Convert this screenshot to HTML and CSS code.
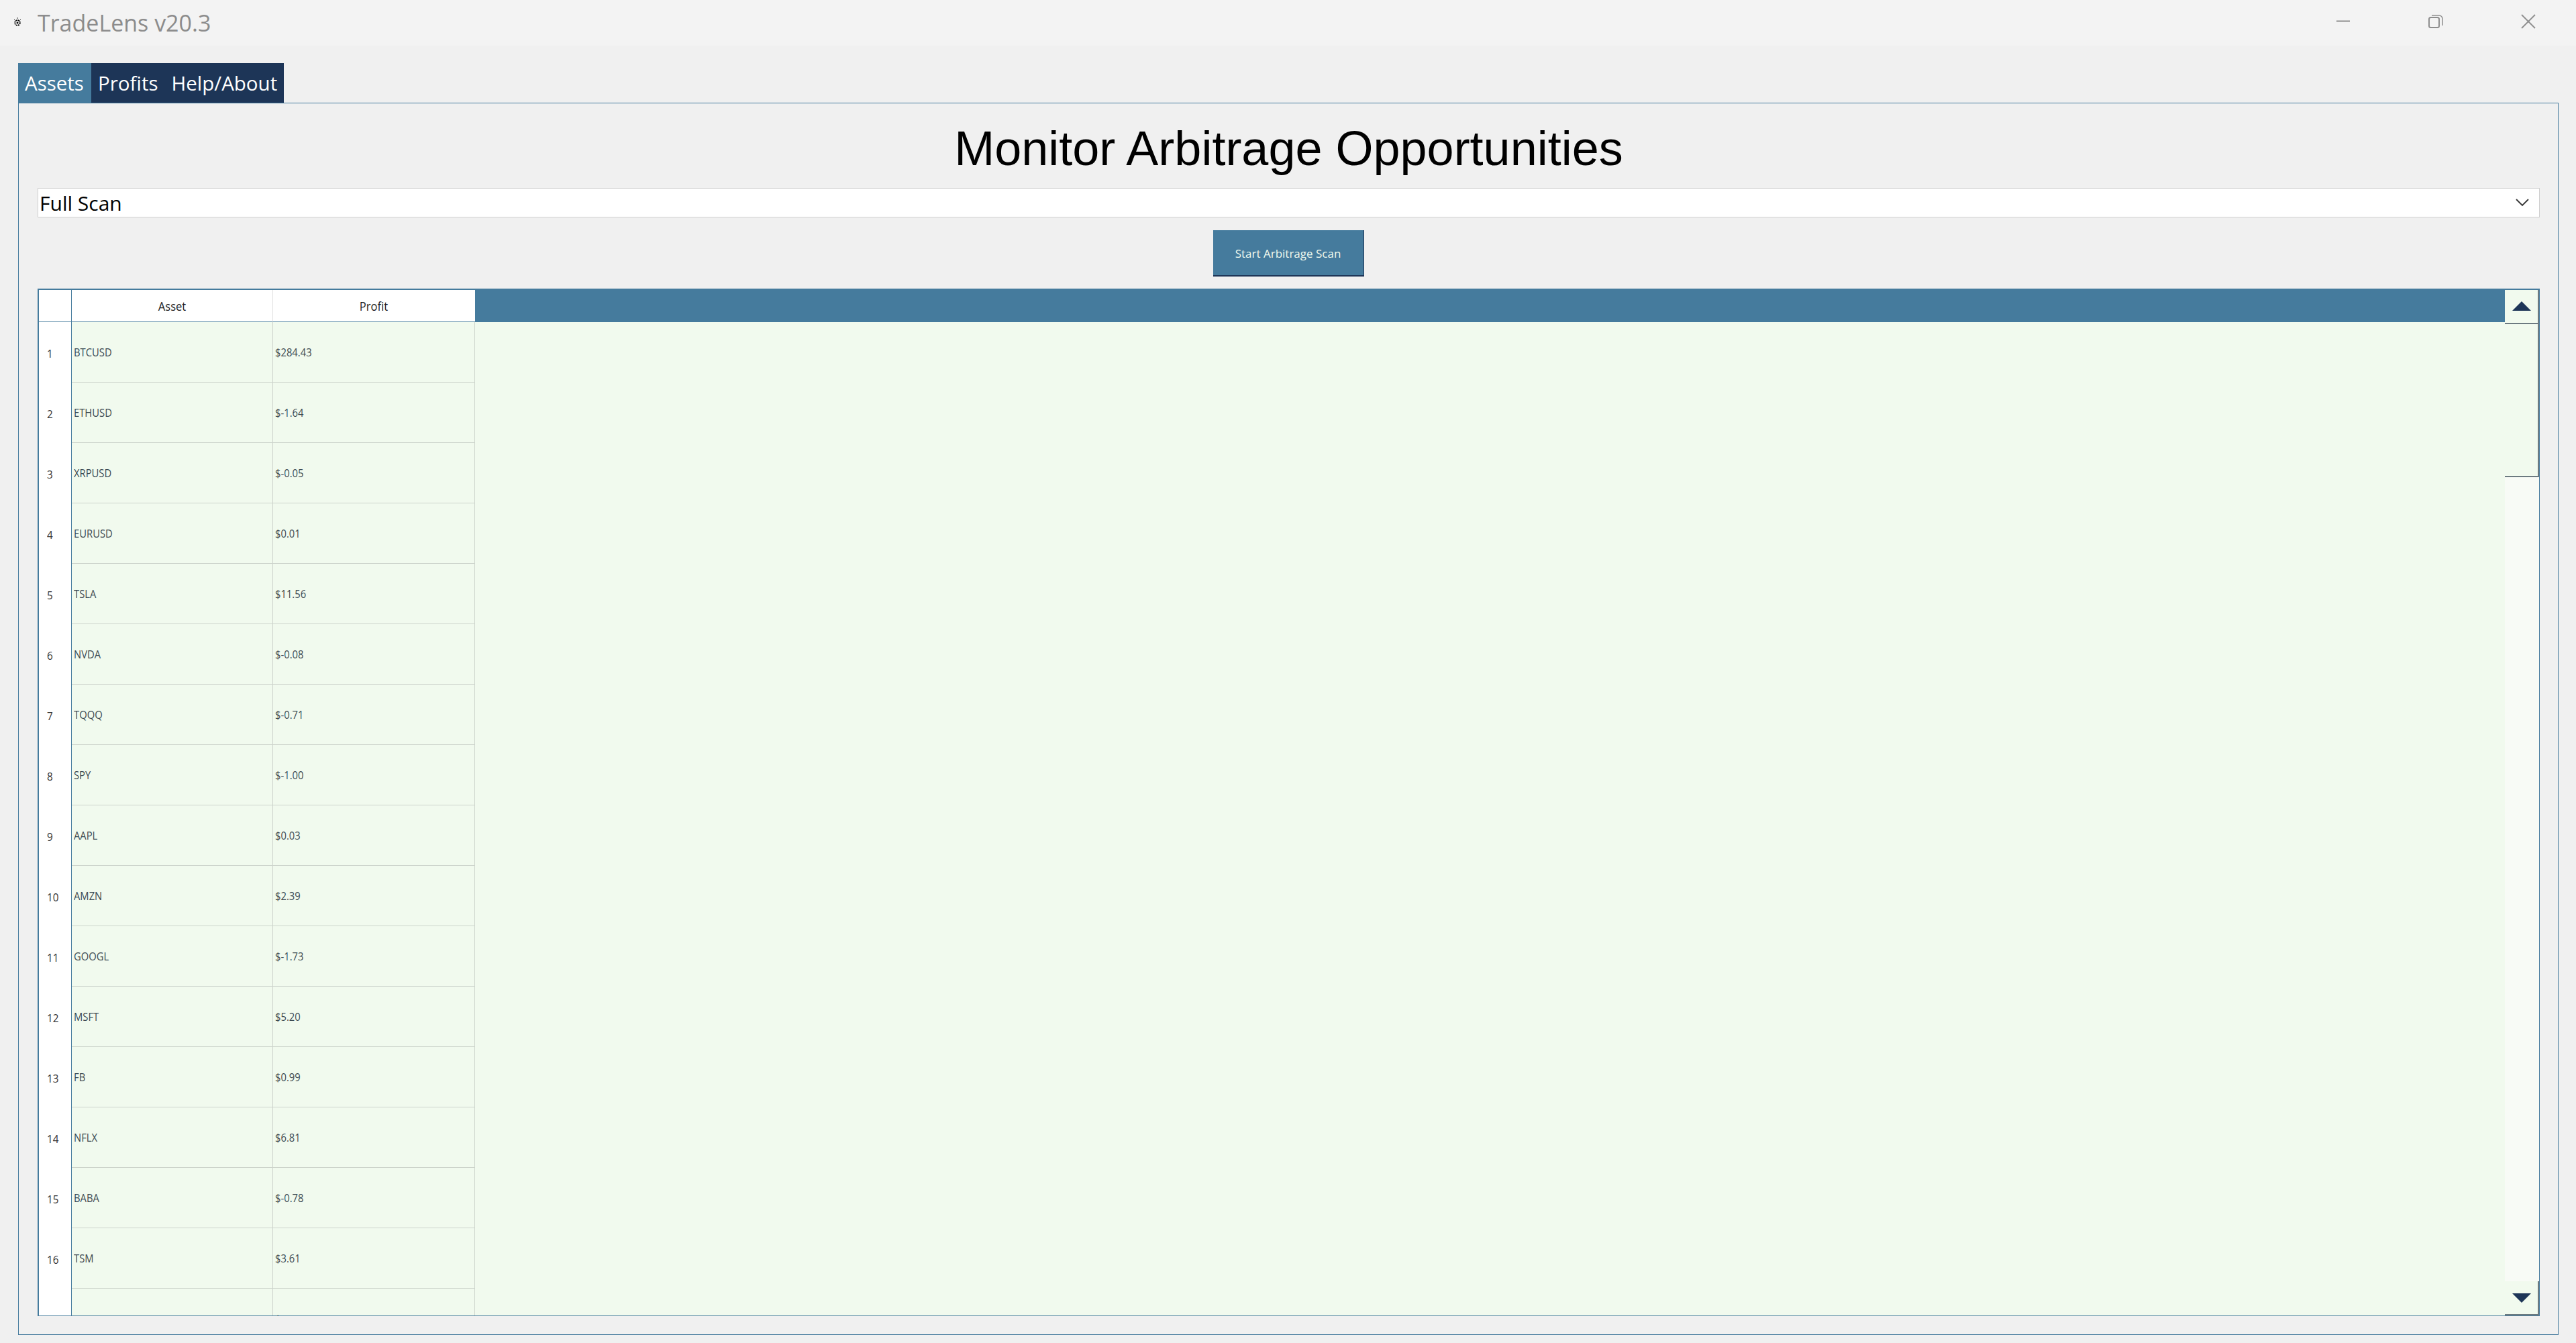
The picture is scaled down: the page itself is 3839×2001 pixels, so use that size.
FILE: index.html
```html
<!DOCTYPE html>
<html lang="en">
<head>
<meta charset="utf-8">
<title>TradeLens v20.3</title>
<link rel="stylesheet" href="styles.css">
</head>
<body>
<header class="titlebar">
  <div class="app-id">
    <svg class="feather" width="12" height="14" viewBox="0 0 12 14"><circle cx="6" cy="8" r="3.800" fill="none" stroke="#000" stroke-width="1.800" stroke-dasharray="2 1"/><circle cx="6" cy="8" r="1.500" fill="#111"/><path d="M6 0v2M1 3l1.500 1.500M11 3L9.500 4.500" stroke="#333" stroke-width="1"/></svg>
    <span class="app-title">TradeLens v20.3</span>
  </div>
  <div class="win-controls">
    <svg class="win-btn" width="22" height="22" viewBox="0 0 22 22"><path d="M1 10.500h20" stroke="#8e8e8e" stroke-width="2"/></svg>
    <svg class="win-btn" width="22" height="22" viewBox="0 0 22 22"><rect x="1" y="5" width="15" height="15" rx="2.500" fill="none" stroke="#8e8e8e" stroke-width="2"/><path d="M5 2h11a5 5 0 0 1 5 5v10" fill="none" stroke="#8e8e8e" stroke-width="1.500"/></svg>
    <svg class="win-btn" width="22" height="22" viewBox="0 0 22 22"><path d="M1 1l20 20M21 1L1 21" stroke="#8e8e8e" stroke-width="1.800"/></svg>
  </div>
</header>
<main class="main">
  <nav class="tabs">
    <div class="tab tab-active">Assets</div>
    <div class="tab">Profits</div>
    <div class="tab">Help/About</div>
  </nav>
  <section class="pane">
    <h1 class="heading">Monitor Arbitrage Opportunities</h1>
    <div class="combo">
      <span>Full Scan</span>
      <svg width="20" height="12" viewBox="0 0 20 12"><path d="M1 1l9 9 9-9" fill="none" stroke="#333" stroke-width="1.800"/></svg>
    </div>
    <div class="btn-row"><button class="scan-btn">Start Arbitrage Scan</button></div>
    <div class="table">
      <div class="table-left">
        <div class="thead">
          <div class="corner"></div>
          <div class="th"><span>Asset</span></div>
          <div class="th th-last"><span>Profit</span></div>
          <div class="th-fill"></div>
        </div>
        <div class="tbody">
          <div class="row"><div class="rh"><span>1</span></div><div class="td"><span>BTCUSD</span></div><div class="td"><span>$284.43</span></div></div>
          <div class="row"><div class="rh"><span>2</span></div><div class="td"><span>ETHUSD</span></div><div class="td"><span>$-1.64</span></div></div>
          <div class="row"><div class="rh"><span>3</span></div><div class="td"><span>XRPUSD</span></div><div class="td"><span>$-0.05</span></div></div>
          <div class="row"><div class="rh"><span>4</span></div><div class="td"><span>EURUSD</span></div><div class="td"><span>$0.01</span></div></div>
          <div class="row"><div class="rh"><span>5</span></div><div class="td"><span>TSLA</span></div><div class="td"><span>$11.56</span></div></div>
          <div class="row"><div class="rh"><span>6</span></div><div class="td"><span>NVDA</span></div><div class="td"><span>$-0.08</span></div></div>
          <div class="row"><div class="rh"><span>7</span></div><div class="td"><span>TQQQ</span></div><div class="td"><span>$-0.71</span></div></div>
          <div class="row"><div class="rh"><span>8</span></div><div class="td"><span>SPY</span></div><div class="td"><span>$-1.00</span></div></div>
          <div class="row"><div class="rh"><span>9</span></div><div class="td"><span>AAPL</span></div><div class="td"><span>$0.03</span></div></div>
          <div class="row"><div class="rh"><span>10</span></div><div class="td"><span>AMZN</span></div><div class="td"><span>$2.39</span></div></div>
          <div class="row"><div class="rh"><span>11</span></div><div class="td"><span>GOOGL</span></div><div class="td"><span>$-1.73</span></div></div>
          <div class="row"><div class="rh"><span>12</span></div><div class="td"><span>MSFT</span></div><div class="td"><span>$5.20</span></div></div>
          <div class="row"><div class="rh"><span>13</span></div><div class="td"><span>FB</span></div><div class="td"><span>$0.99</span></div></div>
          <div class="row"><div class="rh"><span>14</span></div><div class="td"><span>NFLX</span></div><div class="td"><span>$6.81</span></div></div>
          <div class="row"><div class="rh"><span>15</span></div><div class="td"><span>BABA</span></div><div class="td"><span>$-0.78</span></div></div>
          <div class="row"><div class="rh"><span>16</span></div><div class="td"><span>TSM</span></div><div class="td"><span>$3.61</span></div></div>
          <div class="row"><div class="rh"></div><div class="td"></div><div class="td"><span>$</span></div></div>
        </div>
      </div>
      <div class="scrollbar">
        <div class="sb-btn"><i class="tri tri-up"></i></div>
        <div class="sb-thumb"></div>
        <div class="sb-track"></div>
        <div class="sb-btn sb-btn-down"><i class="tri tri-down"></i></div>
      </div>
    </div>
  </section>
</main>
</body>
</html>
```
FILE: styles.css
```css
* { box-sizing: border-box; }
html, body { margin: 0; height: 100%; }
body {
  background: #f0f0f0;
  display: flex;
  flex-direction: column;
  font-family: "Open Sans", "Noto Sans", sans-serif;
  overflow: hidden;
}
.titlebar {
  height: 68px;
  flex: none;
  background: #f3f3f3;
  display: flex;
  align-items: center;
  justify-content: space-between;
}
.app-id { display: flex; align-items: center; padding-left: 20px; }
.feather { flex: none; margin-top: -2px; }
.app-title {
  margin-left: 24px;
  font-size: 34px;
  color: #8c8c8c;
  line-height: 1;
}
.win-controls {
  display: flex;
  gap: 116px;
  padding-right: 60px;
  margin-top: -4px;
}
.win-btn { display: block; }
.main {
  flex: 1;
  min-height: 0;
  display: flex;
  flex-direction: column;
  padding: 26px 26px 12px 27px;
}
.tabs { display: flex; align-self: flex-start; height: 59px; background: #1d3557; }
.tab {
  color: #fff;
  font-size: 29.500px;
  line-height: 59px;
  padding: 0 10px;
}
.tab-active { background: #457b9d; width: 109px; }
.pane {
  flex: 1;
  min-height: 0;
  border: 1px solid #457b9d;
  padding: 0 27px 27px 28px;
  display: flex;
  flex-direction: column;
}
.heading {
  margin: 0;
  text-align: center;
  font-family: "Liberation Sans", Arial, sans-serif;
  font-weight: 400;
  font-size: 72px;
  line-height: 84px;
  margin-top: 25px;
  color: #000;
}
.combo {
  height: 44px;
  margin-top: 17px;
  background: #fff;
  border: 1px solid #cfcfcf;
  display: flex;
  align-items: center;
  justify-content: space-between;
  padding: 0 15px 0 2px;
  font-size: 30px;
  color: #000;
  flex: none;
}
.btn-row { display: flex; justify-content: center; margin-top: 19px; flex: none; }
.scan-btn {
  width: 225px;
  height: 69px;
  margin-right: 1px;
  background: #457b9d;
  color: #f1faee;
  font-family: "Open Sans", sans-serif;
  font-size: 17px;
  border: 0;
  border-right: 1px solid #1d3557;
  border-bottom: 2px solid #1d3557;
  padding: 2px 0 0;
}
.table {
  flex: 1;
  min-height: 0;
  margin-top: 18px;
  display: flex;
  border: 1px solid #457b9d;
  border-top-width: 2px;
  background: #f1faee;
}
.table-left {
  flex: 1;
  min-width: 0;
  display: flex;
  flex-direction: column;
  border-left: 1px solid #457b9d;
}
.thead {
  display: flex;
  height: 48px;
  flex: none;
}
.corner { width: 49px; background: #fff; border-bottom: 1px solid #457b9d; border-right: 1px solid #457b9d; flex: none; }
.th {
  width: 300px;
  flex: none;
  background: #fff;
  border-right: 1px solid #e2e2e2;
  border-bottom: 1px solid #457b9d;
  display: flex;
  align-items: center;
  justify-content: center;
  font-size: 18px;
  color: #1e1e1e;
}
.th-last { width: 301px; border-right: 0; }
.th span { display: inline-block; transform: scaleX(.92); }
.th-fill { flex: 1; background: #457b9d; }
.tbody { flex: 1; min-height: 0; overflow: hidden; }
.row {
  display: grid;
  grid-template-columns: 49px 300px 301px;
  height: 90px;
}
.rh {
  background: #fff;
  border-right: 1px solid #457b9d;
  display: flex;
  align-items: center;
  padding: 3px 0 0 12px;
  font-size: 17px;
  color: #333;
}
.rh span { display: inline-block; transform: scaleX(.9); transform-origin: left center; }
.td {
  border-right: 1px solid #ccd3cb;
  border-bottom: 1px solid #ccd3cb;
  display: flex;
  align-items: center;
  padding: 0 0 0 3px;
  font-size: 17px;
  color: #3c4a52;
}
.td span { display: inline-block; transform: scaleX(.87); transform-origin: left center; }
.scrollbar {
  width: 51px;
  flex: none;
  display: flex;
  flex-direction: column;
  background: #f8fbf6;
}
.sb-btn {
  height: 51px;
  flex: none;
  background: #f1faee;
  border-right: 2px solid #6c7a80;
  border-bottom: 2px solid #6c7a80;
  display: flex;
  align-items: center;
  justify-content: center;
}
.sb-thumb {
  height: 228px;
  flex: none;
  background: #f1faee;
  border-right: 2px solid #6c7a80;
  border-bottom: 2px solid #6c7a80;
}
.sb-track { flex: 1; }
.tri { display: block; width: 0; height: 0; border-left: 14px solid transparent; border-right: 14px solid transparent; }
.tri-up { border-bottom: 14px solid #1d3557; margin-top: -2px; }
.tri-down { border-top: 14px solid #1d3557; }
```
